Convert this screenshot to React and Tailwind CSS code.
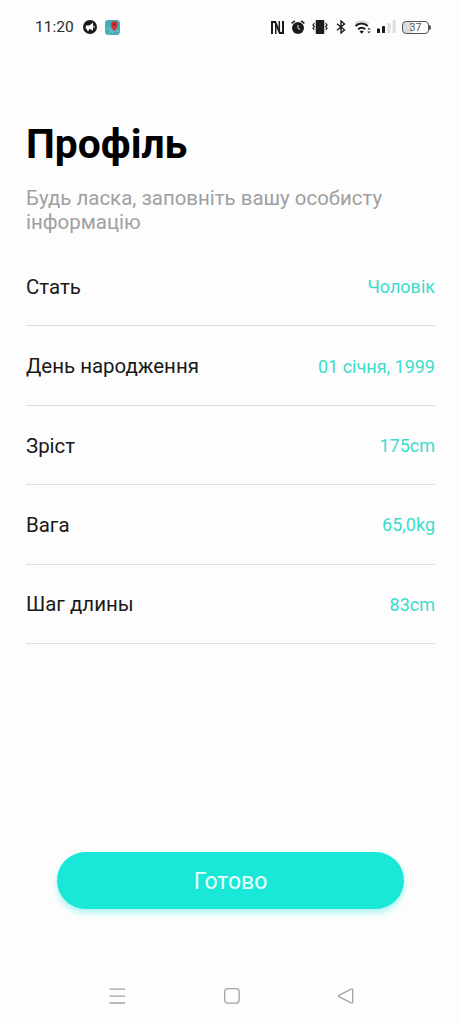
import React from 'react';

const profileRows = [
    { label: 'Стать', value: 'Чоловік' },
    { label: 'День народження', value: '01 січня, 1999' },
    { label: 'Зріст', value: '175cm' },
    { label: 'Вага', value: '65,0kg' },
    { label: 'Шаг длины', value: '83cm' },
];

const MegaphoneIcon = () => (
    <svg className="ml-[10px] h-[14px] w-[14px]" viewBox="0 0 14 14">
        <circle cx="7" cy="7" r="7" fill="#1b1b1b" />
        <path d="M2.8 5.4h3.4L10 2.800v7.800L6.600 9H6v1.800H4V9H2.800z" fill="#fff" />
        <path d="M11 5.600v2.300" stroke="#fff" strokeWidth="1" />
    </svg>
);

const MapIcon = () => (
    <svg className="ml-2 h-[15px] w-[15px]" viewBox="0 0 15 15">
        <rect width="15" height="15" rx="3.4" fill="#45adb8" />
        <path d="M0 10.5l4-3 3 5 5-2 3 2M3.5 15l2-5" stroke="#78c8ce" strokeWidth="0.9" fill="none" />
        <path d="M9.4 11.6C7.5 8.5 6 6.800 6 4.600a3.400 3.400 0 0 1 6.800 0c0 2.200-1.500 3.900-3.400 7z" fill="#d62f32" />
        <circle cx="9.400" cy="4.500" r="1.300" fill="#6e3038" />
    </svg>
);

const NfcIcon = () => (
    <svg className="h-[13px] w-[13px]" viewBox="0 0 13 13" fill="none" stroke="#1b1b1b" strokeWidth="2">
        <path d="M1 13V1h3.200L8.800 12H12V0" />
        <path d="M4.700 3.500V13M8.300 0v9.500" strokeWidth="1.500" />
    </svg>
);

const AlarmIcon = () => (
    <svg className="ml-[7px] h-[14px] w-[14px]" viewBox="0 0 14 14" fill="none">
        <circle cx="7" cy="8" r="6" fill="#1b1b1b" />
        <path d="M0.600 3.400L3.900 0.800M13.400 3.400L10.100 0.800" stroke="#1b1b1b" strokeWidth="1.500" />
        <path d="M7 5v3.300l2.200 1.300" stroke="#fff" strokeWidth="0.900" />
    </svg>
);

const VibrateIcon = () => (
    <svg className="ml-[7px] h-[14px] w-4" viewBox="0 0 16 14" fill="none" stroke="#1b1b1b">
        <rect x="3.700" y="0" width="8.600" height="14" rx="1" fill="#1b1b1b" stroke="none" />
        <path d="M2.300 3.200L1 4.900l1.300 1.700L1 8.300 2.300 10M13.700 3.200L15 4.900l-1.300 1.700L15 8.300 13.700 10" strokeWidth="1.200" />
    </svg>
);

const BluetoothIcon = () => (
    <svg className="ml-2 h-[14px] w-[10px]" viewBox="0 0 10 14" fill="none" stroke="#1b1b1b" strokeWidth="1.400">
        <path d="M1 3.800L8.500 10 5 13V1l3.500 3L1 10.200" />
    </svg>
);

const WifiIcon = () => (
    <svg className="ml-2 h-[14px] w-[17px]" viewBox="0 0 17 14" fill="none" stroke="#1b1b1b">
        <path d="M0.700 4a10.500 10.500 0 0 1 14 0" strokeWidth="1.500" stroke="#d2d2d2" />
        <path d="M1.500 6a8.800 8.800 0 0 1 12.200 0" strokeWidth="2.100" />
        <path d="M4.200 9.200a5.200 5.200 0 0 1 7 0" strokeWidth="2" />
        <path d="M5.600 11.400a3.200 3.200 0 0 1 4.200 0L7.700 13.700z" fill="#1b1b1b" stroke="none" />
        <path d="M13.300 9.600L15 7.800l1.700 1.800zM13.300 11.500L15 13.300l1.700-1.800z" fill="#1b1b1b" stroke="none" />
    </svg>
);

const SignalIcon = () => (
    <svg className="ml-[6px] h-[14px] w-[19px]" viewBox="0 0 19 14">
        <rect x="0" y="8.500" width="3" height="4.500" rx="0.600" fill="#1b1b1b" />
        <rect x="5" y="6" width="3" height="7" rx="0.600" fill="#1b1b1b" />
        <rect x="10.500" y="3" width="3" height="10" rx="0.600" fill="#dedede" />
        <rect x="15.700" y="0" width="3" height="13" rx="0.600" fill="#dedede" />
    </svg>
);

const Battery = () => (
    <div className="ml-[6px] flex items-center">
        <div className="flex h-[13px] w-[27px] items-center justify-center rounded-[4px] border border-[#555] bg-[linear-gradient(90deg,#dcdcdc_37%,#fdfdfd_37%)] text-[10.500px] leading-none text-[#555]">
            <span className="pt-[2px]">37</span>
        </div>
        <div className="h-[5px] w-[2px] rounded-r-sm bg-[#555]"></div>
    </div>
);

const StatusBar = () => (
    <header className="flex h-[54px] items-center pl-[35px] pr-[30px] text-[#2b2b2b]">
        <span className="w-[38px] whitespace-nowrap pt-[2px] text-[15.500px] leading-none">11:20</span>
        <MegaphoneIcon />
        <MapIcon />
        <div className="ml-auto flex items-center">
            <NfcIcon />
            <AlarmIcon />
            <VibrateIcon />
            <BluetoothIcon />
            <WifiIcon />
            <SignalIcon />
            <Battery />
        </div>
    </header>
);

const NavigationBar = () => (
    <nav className="mt-auto flex h-14 items-center justify-between pl-[109px] pr-[107px]">
        <svg className="h-4 w-4" viewBox="0 0 16 16" stroke="#a3a3a3" strokeWidth="1.300">
            <path d="M0.500 1.200h15.500M0.500 8.200h15.500M0.500 15h15.500" />
        </svg>
        <svg className="h-4 w-4" viewBox="0 0 16 16" fill="none" stroke="#a3a3a3" strokeWidth="1.300">
            <rect x="0.700" y="0.700" width="14.400" height="14.400" rx="3" />
        </svg>
        <svg className="h-4 w-4" viewBox="0 0 16 16" fill="none" stroke="#a3a3a3" strokeWidth="1.300" strokeLinejoin="round">
            <path d="M0.900 7.300L13.200 1.200q1.500-.6 1.500 1v11.600q0 1.600-1.500 1L0.900 8.700q-1.200-.7 0-1.400z" />
        </svg>
    </nav>
);

const App = () => {
    return (
        <div className="flex h-screen w-full flex-col overflow-hidden bg-[#fdfdfd] font-[Roboto,sans-serif]">
            <StatusBar />

            <main className="px-[26px] pt-[66px]">
                <h1 className="text-[40.800px] font-bold leading-[48px] text-black">Профіль</h1>
                <p className="mt-[18px] text-[20.450px] leading-6 text-[#a0a0a0]">
                    Будь ласка, заповніть вашу особисту інформацію
                </p>

                <dl className="mt-[13px]">
                    {profileRows.map((row) => (
                        <div
                            key={row.label}
                            className="flex h-[79.400px] items-center justify-between border-b border-[#dfdfdf] pt-[2px]"
                        >
                            <dt className="text-[20.450px] text-[#191919]">{row.label}</dt>
                            <dd className="pb-px text-[18px] text-[#3cdccb]">{row.value}</dd>
                        </div>
                    ))}
                </dl>
            </main>

            <button className="ml-[57px] mt-[208px] h-[57px] w-[347px] shrink-0 rounded-full bg-[#19e8d8] pt-[3px] text-[23px] text-[#e9fffc] shadow-[0_4px_6px_rgba(25,232,216,0.35)]">
                Готово
            </button>

            <NavigationBar />
        </div>
    );
};

export default App;
